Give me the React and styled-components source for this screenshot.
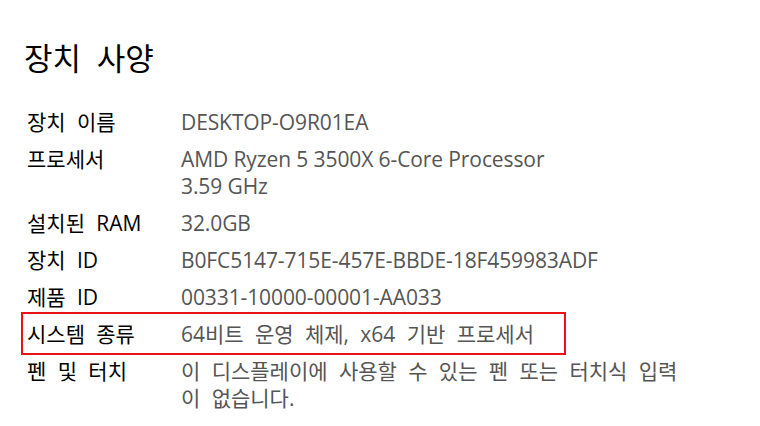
import React from "react";
import styled, { createGlobalStyle } from "styled-components";

const GlobalStyle = createGlobalStyle`
  body {
    margin: 0;
    background: #ffffff;
    font-family: "Open Sans", "Noto Sans CJK KR", sans-serif;
  }
`;

const Container = styled.div`
  width: 760px;
  height: 426px;
  padding: 36px 0 0 24px;
  box-sizing: border-box;
  overflow: hidden;
`;

const Title = styled.h1`
  margin: 0 0 29px 0;
  font-size: 31px;
  font-weight: 400;
  line-height: 44px;
  word-spacing: 0.25em;
  color: #000;
`;

const Specs = styled.div`
  display: flex;
  flex-direction: column;
  gap: 10px;
`;

const Row = styled.div`
  display: grid;
  grid-template-columns: 155px 1fr;
  align-items: start;
`;

const HighlightRow = styled(Row)`
  width: 540px;
  margin: -9px 0 -7px -3px;
  padding: 7px 0 5px 1px;
  border: 2px solid #e8131b;
`;

const Label = styled.div`
  font-size: 21px;
  line-height: 27px;
  color: #000;
  padding-left: 3px;
  word-spacing: 0.28em;
`;

const Value = styled.div`
  font-size: 21px;
  line-height: 27px;
  color: #555;
  padding-left: 2px;
`;

const Line = styled.div`
  word-spacing: ${({ $kr }) => ($kr ? "0.28em" : "0")};
  letter-spacing: ${({ $kr }) => ($kr ? "0" : "-0.1px")};
`;

const hasHangul = (text) => /[\uac00-\ud7a3]/.test(text);

const specs = [
  { label: "장치 이름", value: ["DESKTOP-O9R01EA"] },
  { label: "프로세서", value: ["AMD Ryzen 5 3500X 6-Core Processor", "3.59 GHz"] },
  { label: "설치된 RAM", value: ["32.0GB"] },
  { label: "장치 ID", value: ["B0FC5147-715E-457E-BBDE-18F459983ADF"] },
  { label: "제품 ID", value: ["00331-10000-00001-AA033"] },
  { label: "시스템 종류", value: ["64비트 운영 체제, x64 기반 프로세서"], highlight: true },
  { label: "펜 및 터치", value: ["이 디스플레이에 사용할 수 있는 펜 또는 터치식 입력", "이 없습니다."] },
];

function SpecRow({ spec }) {
  const Wrapper = spec.highlight ? HighlightRow : Row;
  return (
    <Wrapper>
      <Label>{spec.label}</Label>
      <Value>
        {spec.value.map((line) => (
          <Line key={line} $kr={hasHangul(line)}>
            {line}
          </Line>
        ))}
      </Value>
    </Wrapper>
  );
}

export default function App() {
  return (
    <>
      <GlobalStyle />
      <Container>
        <Title>장치 사양</Title>
        <Specs>
          {specs.map((s) => (
            <SpecRow key={s.label} spec={s} />
          ))}
        </Specs>
      </Container>
    </>
  );
}
